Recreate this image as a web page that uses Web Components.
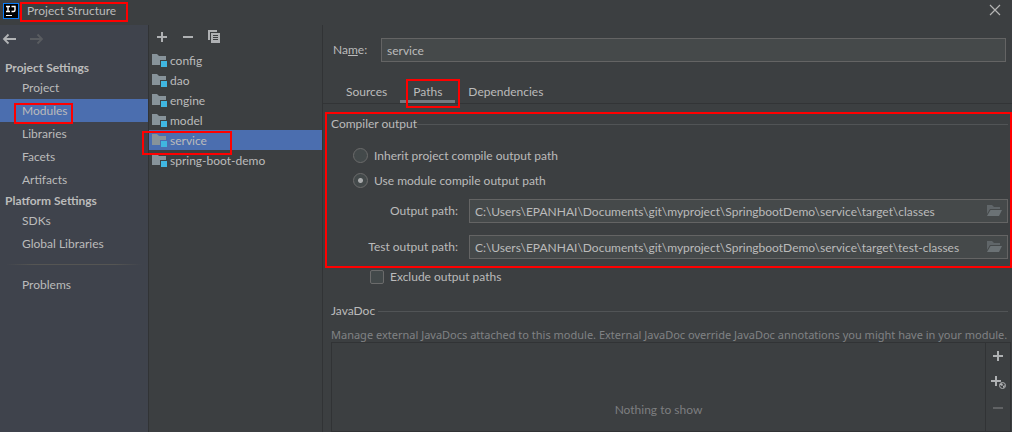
<!DOCTYPE html>
<html lang="en">
<head>
<meta charset="utf-8">
<title>Project Structure</title>
<style>
html, body { margin: 0; height: 100%; background: #3c3f41; }
body { font: 12px/16px Lato, "Noto Sans", sans-serif; color: #bbbbbb; overflow: hidden; }
</style>
</head>
<body>
<structure-dialog></structure-dialog>
<script>
const define = (name, html, setup) => customElements.define(name, class extends HTMLElement {
  connectedCallback() {
    if (this.shadowRoot) return;
    const root = this.attachShadow({ mode: 'open' });
    root.innerHTML = '<style>*{box-sizing:border-box}button,input{font:inherit;color:inherit;margin:0}button{background:none;border:0;padding:0;display:block}svg{display:block}</style>' + html;
    if (setup) setup(this, root);
  }
});

/* Red annotation frame laid over its nearest positioned ancestor */
define('callout-frame', `<style>
:host{position:absolute;box-sizing:border-box;border:2px solid #ff0000;pointer-events:none;z-index:2}
</style>`);

define('title-bar', `<style>
:host{display:flex;height:25px;align-items:flex-start;padding:0 11px 0 3px;background:#3c3f41;flex:none}
svg.logo{margin-top:3px}
.title{position:relative;margin-left:8px;padding-top:3px;flex:1}
.title h1{font:inherit;margin:0}
callout-frame{left:-7px;top:2px;width:108px;height:20px}
button{margin-top:4px}
</style>
<svg class="logo" width="16" height="16" viewBox="0 0 16 16"><rect width="16" height="16" fill="#087cfa"/><rect x="1" y="1" width="14" height="14" fill="#000"/><path d="M3 3.500h4M3 8.500h4M5 3.500v5M8.500 3.500h3.500v3.500q0 1.500-1.500 1.500H8.500" fill="none" stroke="#fff" stroke-width="1.400"/><rect x="3" y="12" width="6" height="1" fill="#fff"/></svg>
<div class="title"><h1>Project Structure</h1><callout-frame></callout-frame></div>
<button aria-label="Close"><svg width="12" height="12" viewBox="0 0 12 12"><path d="M1 1l10 10M11 1L1 11" stroke="#b4b4b4" stroke-width="1.200"/></svg></button>`);

define('nav-item', `<style>
:host{display:block;position:relative}
a{display:block;height:23px;line-height:23px;padding-left:22px;color:inherit;text-decoration:none}
:host([selected]) a{background:#4b6eaf}
</style><a href="#"><slot></slot></a><slot name="mark"></slot>`);

define('settings-nav', `<style>
:host{display:block;background:#3f434c;border-right:1px solid #313335}
.tools{display:flex;align-items:flex-start;gap:12px;height:33px;padding:7px 0 0 2px}
h2{font-size:12px;line-height:18px;font-weight:bold;margin:0;padding:1px 0 0 5px;height:18px}
hr{height:1px;border:0;margin:9px 6px 8px;background:linear-gradient(90deg,transparent,#555553 20%,#555553 80%,transparent)}
callout-frame{left:14px;top:4px;width:59px;height:21px}
</style>
<div class="tools">
<button aria-label="Back"><svg width="15" height="14" viewBox="0 0 15 14"><path d="M2 7h12M6.500 2.500L2 7l4.500 4.500" fill="none" stroke="#b2b4b6" stroke-width="1.800"/></svg></button>
<button aria-label="Forward" disabled><svg width="15" height="14" viewBox="0 0 15 14"><path d="M1 7h12M8.500 2.500L13 7l-4.500 4.500" fill="none" stroke="#595c60" stroke-width="1.800"/></svg></button>
</div>
<h2>Project Settings</h2>
<nav-item>Project</nav-item>
<nav-item selected>Modules<callout-frame slot="mark"></callout-frame></nav-item>
<nav-item>Libraries</nav-item>
<nav-item>Facets</nav-item>
<nav-item>Artifacts</nav-item>
<h2>Platform Settings</h2>
<nav-item>SDKs</nav-item>
<nav-item>Global Libraries</nav-item>
<hr>
<nav-item>Problems</nav-item>`);

define('module-item', `<style>
:host{display:block;position:relative}
button{display:flex;width:100%;height:20px;align-items:center;padding:1px 0 0 3px;gap:3px;text-align:left}
:host([selected]) button{background:#4b6eaf}
</style><button><svg width="15" height="15" viewBox="0 0 15 15"><path d="M0 1h5l2 2h7v4H8v5H0z" fill="#87939a"/><rect x="9" y="8" width="6" height="6" fill="#40b6e0"/></svg><span><slot></slot></span></button><slot name="mark"></slot>`);

define('module-list', `<style>
:host{display:block;border-right:1px solid #313335}
.tools{display:flex;align-items:flex-start;gap:14px;height:25px;padding:5px 0 0 7px}
callout-frame{left:-7px;top:1px;width:90px;height:24px}
</style>
<div class="tools">
<button aria-label="Add"><svg width="12" height="14" viewBox="0 0 12 14"><path d="M1 7h10M6 2v10" stroke="#afb1b3" stroke-width="2"/></svg></button>
<button aria-label="Remove"><svg width="12" height="14" viewBox="0 0 12 14"><path d="M1 7h10" stroke="#afb1b3" stroke-width="2"/></svg></button>
<button aria-label="Copy"><svg width="14" height="14" viewBox="0 0 14 14"><path d="M0 0h9v2H2v8H0z" fill="#afb1b3"/><path d="M3 3h9v10H3z" fill="#afb1b3"/><path d="M5 5.500h5M5 7.500h5M5 9.500h5" stroke="#3c3f41"/></svg></button>
</div>
<module-item>config</module-item>
<module-item>dao</module-item>
<module-item>engine</module-item>
<module-item>model</module-item>
<module-item selected>service<callout-frame slot="mark"></callout-frame></module-item>
<module-item>spring-boot-demo</module-item>`);

define('name-field', `<style>
:host{display:flex;align-items:center;padding:13px 6px 0 10px}
label{width:48px}
input{flex:1;min-width:0;height:24px;padding:0 5px;background:#45494a;border:1px solid #646464;outline:0}
</style><label for="n">Na<u>m</u>e:</label><input id="n" value="service">`);

define('tab-button', `<style>
:host{display:block;position:relative;padding:0 13px}
button{height:23px;line-height:23px}
:host([selected])::after{content:"";position:absolute;left:0;right:0;bottom:0;height:3px;background:#747a80}
</style><button role="tab"><slot></slot></button><slot name="mark"></slot>`);

define('tab-strip', `<style>
:host{display:flex;padding:18px 0 0 10px;border-bottom:1px solid #323436}
callout-frame{left:6px;top:-1px;width:54px;height:29px}
</style><tab-button>Sources</tab-button><tab-button selected>Paths<callout-frame slot="mark"></callout-frame></tab-button><tab-button>Dependencies</tab-button>`);

define('group-title', `<style>
:host{display:flex;align-items:center;height:16px}
h3{font:inherit;margin:0}
i{flex:1;height:1px;background:#515456}
</style><h3><slot></slot></h3><i></i>`);

define('compiler-output', `<style>
:host{display:block;position:relative;padding:12px 4px 0 8px}
.opts{padding:11px 0 0 22px}
.opt{display:flex;align-items:center;height:25px;gap:6px}
input[type=radio]{appearance:none;width:15px;height:15px;border:1px solid #6b6b6b;border-radius:50%;background:#43494a}
input[type=radio]:checked{background:radial-gradient(circle,#a9abac 2px,#43494a 3px)}
.fields{display:grid;grid-template-columns:127px 1fr;column-gap:11px;row-gap:12px;align-items:center;padding-top:6px}
.fields label{text-align:right}
.path{display:flex;align-items:center;height:24px;background:#45494a;border:1px solid #646464;padding-right:5px}
.path input{flex:1;min-width:0;height:22px;padding:0 5px;background:none;border:0;outline:0}
.ex{display:flex;align-items:center;gap:6px;padding:8px 0 0 39px;height:28px}
input[type=checkbox]{appearance:none;width:14px;height:14px;border:1px solid #6b6b6b;border-radius:2px;background:#43494a}
callout-frame{left:2px;right:0;top:8px;height:156px}
</style>
<group-title>Compiler output</group-title>
<div class="opts">
<div class="opt"><input type="radio" name="o" id="a"><label for="a">Inherit project compile output path</label></div>
<div class="opt"><input type="radio" name="o" id="b" checked><label for="b">Use module compile output path</label></div>
</div>
<div class="fields">
<label for="p">Output path:</label><div class="path"><input id="p" value="C:\\Users\\EPANHAI\\Documents\\git\\myproject\\SpringbootDemo\\service\\target\\classes"><folder-button></folder-button></div>
<label for="t">Test output path:</label><div class="path"><input id="t" value="C:\\Users\\EPANHAI\\Documents\\git\\myproject\\SpringbootDemo\\service\\target\\test-classes"><folder-button></folder-button></div>
</div>
<div class="ex"><input type="checkbox" id="e"><label for="e">Exclude output paths</label></div>
<callout-frame></callout-frame>`);

define('folder-button', `<style>:host{display:block}</style><button aria-label="Browse"><svg width="16" height="14" viewBox="0 0 16 14"><path d="M1 1h5l2 2h6v2H4L1 10z" fill="#606669"/><path d="M4.500 6H16l-3 6H1z" fill="#6b7275"/></svg></button>`);

define('javadoc-panel', `<style>
:host{display:flex;flex-direction:column;flex:1;padding:16px 0 0 8px}
group-title{margin-right:4px}
p{margin:8px 0 0;font:11px/15px "Noto Sans",sans-serif;color:#808284;white-space:nowrap}
.box{display:flex;flex:1;border:1px solid #313335;margin-right:1px}
.list{flex:1;display:flex;justify-content:center;align-items:flex-end;padding-bottom:13px;color:#7c7e80}
.side{width:25px;border-left:1px solid #313335;display:flex;flex-direction:column;align-items:flex-start;gap:10px;padding:5px 0 0 4px}
</style>
<group-title>JavaDoc&nbsp;</group-title>
<p>Manage external JavaDocs attached to this module. External JavaDoc override JavaDoc annotations you might have in your module.</p>
<div class="box"><div class="list">Nothing to show</div>
<div class="side">
<button aria-label="Add"><svg width="16" height="16" viewBox="0 0 16 16"><path d="M3 8h10M8 3v10" stroke="#afb1b3" stroke-width="2"/></svg></button>
<button aria-label="Specify URL"><svg width="16" height="16" viewBox="0 0 16 16"><path d="M1 7h10M6 2v10" stroke="#afb1b3" stroke-width="2"/><circle cx="12.500" cy="11.500" r="4" fill="#3c3f41"/><circle cx="12.500" cy="11.500" r="3" fill="#3c3f41" stroke="#afb1b3"/><path d="M10 10l2-1 1 2-1 1-2-1zM13 12l2-1-.5 2-1.500 1z" fill="#afb1b3"/></svg></button>
<button aria-label="Remove" disabled><svg width="16" height="16" viewBox="0 0 16 16"><path d="M3 8h10" stroke="#606264" stroke-width="2"/></svg></button>
</div></div>`);

define('structure-dialog', `<style>
:host{display:flex;flex-direction:column;height:100vh}
.body{flex:1;min-height:0;display:grid;grid-template-columns:149px 174px minmax(0,1fr)}
main{display:flex;flex-direction:column;min-width:0;min-height:0}
</style>
<title-bar></title-bar>
<div class="body"><settings-nav></settings-nav><module-list></module-list>
<main><name-field></name-field><tab-strip></tab-strip><compiler-output></compiler-output><javadoc-panel></javadoc-panel></main></div>`);
</script>
</body>
</html>
